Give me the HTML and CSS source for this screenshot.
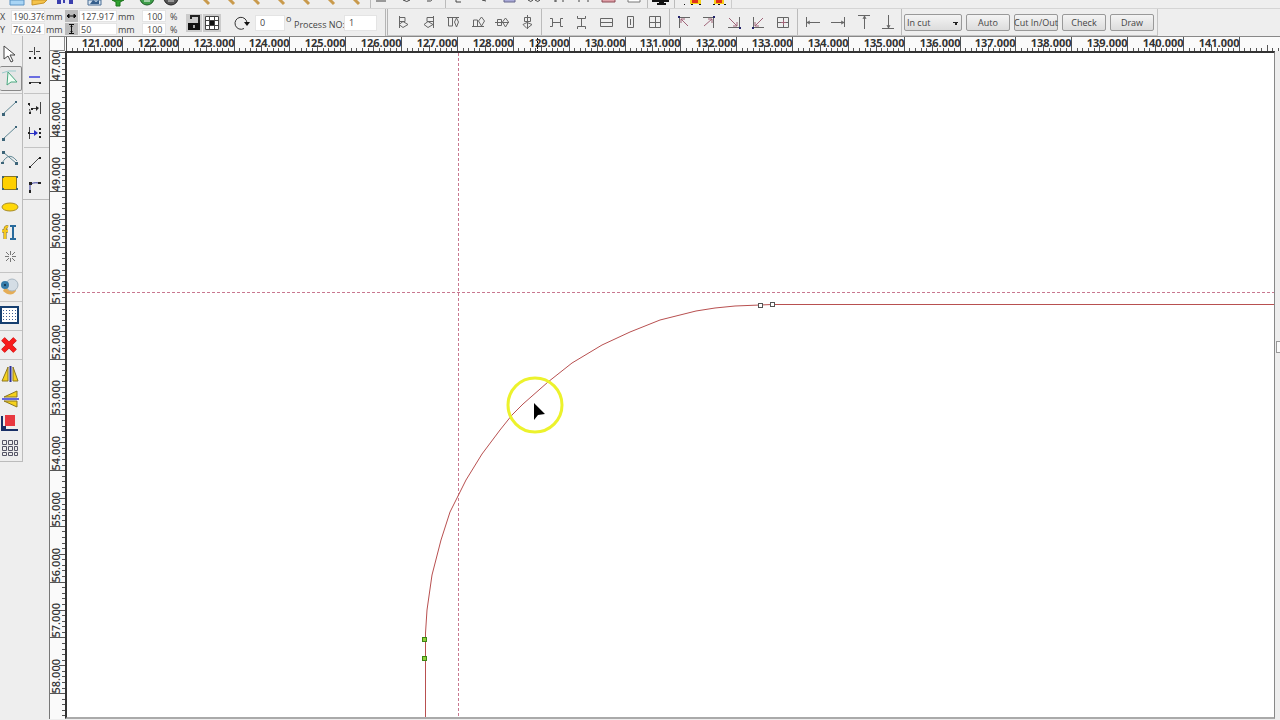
FILE: index.html
```html
<!DOCTYPE html>
<html lang="en">
<head>
    <meta charset="UTF-8">
    <meta name="viewport" content="width=device-width, initial-scale=1.0">
    <title>Laser Cut Editor</title>
    <link rel="stylesheet" href="styles.css">
</head>
<body>

<div class="main-toolbar">
    <div class="strip">
        <button aria-label="New"><svg width="24" height="8"><path d="M5 0h14v5H5z" fill="#a9d5f5" stroke="#5a93c4"/></svg></button>
        <button aria-label="Open"><svg width="24" height="8"><path d="M3 0h15l-3 3-12 2z" fill="#f5c34a" stroke="#c89428"/></svg></button>
        <button aria-label="Save"><svg width="24" height="8"><path d="M4 0h16v4H4z" fill="#3a3fae"/><path d="M8 0h8v4H8z" fill="#e8e8f4"/><path d="M10 0h2v3h-2z" fill="#3a3fae"/></svg></button>
    </div>
    <i class="cut"></i>
    <div class="strip">
        <button aria-label="Import"><svg width="24" height="8"><path d="M6 0h13v5H6z" fill="#d7e4f0" stroke="#4a6f96"/><path d="M8 4l3-4 3 2 3-2v4z" fill="#365f8c"/></svg></button>
        <button aria-label="Export"><svg width="24" height="8"><path d="M6 0h12l-4 2v4h-4V2z" fill="#2fa32f" stroke="#1c741c"/></svg></button>
    </div>
    <i class="cut"></i>
    <div class="strip">
        <button aria-label="Undo"><svg width="24" height="8"><circle cx="12" cy="-2" r="7" fill="#3f9e4a" stroke="#1c5c25"/><path d="M9 1h6" stroke="#fff"/></svg></button>
        <button aria-label="Redo"><svg width="24" height="8"><circle cx="12" cy="-2" r="7" fill="#555" stroke="#222"/><path d="M9 1h6" stroke="#ddd"/></svg></button>
    </div>
    <i class="cut wide"></i>
    <div class="strip zooms">
        <button aria-label="Move view"><svg width="24" height="8"><path d="M9-1l5 5" class="handle"/></svg></button>
        <button aria-label="Zoom in"><svg width="24" height="8"><path d="M9-1l5 5" class="handle"/></svg></button>
        <button aria-label="Zoom out"><svg width="24" height="8"><path d="M9-1l5 5" class="handle"/></svg></button>
        <button aria-label="Zoom window"><svg width="24" height="8"><path d="M9-1l5 5" class="handle"/></svg></button>
        <button aria-label="Zoom page"><svg width="24" height="8"><path d="M9-1l5 5" class="handle"/></svg></button>
        <button aria-label="Zoom all"><svg width="24" height="8"><path d="M9-1l5 5" class="handle"/></svg></button>
        <button aria-label="Zoom selection"><svg width="24" height="8"><path d="M9-1l5 5" class="handle"/></svg></button>
    </div>
    <i class="rule"></i>
    <div class="strip">
        <button aria-label="Path"><svg width="24" height="8"><path d="M4 1h10" class="dark"/></svg></button>
        <button aria-label="Close curve"><svg width="24" height="8"><path d="M7 0q4 3 7 0" class="dark"/></svg></button>
        <button aria-label="Smooth"><svg width="24" height="8"><path d="M7 1q4 1 6-2" class="dark"/></svg></button>
    </div>
    <i class="rule"></i>
    <div class="strip zooms">
        <button aria-label="Check data"><svg width="24" height="8"><path d="M9 0v2h5" class="dark"/></svg></button>
        <button aria-label="Merge"><svg width="24" height="8"><path d="M10 0l4 1" class="dark"/></svg></button>
        <button aria-label="Offset"><svg width="24" height="8"><path d="M7-1h11v3H7z" fill="#a9a9d8" stroke="#66668c"/></svg></button>
        <button aria-label="Link"><svg width="24" height="8"><path d="M6 0q3 3 5 0M13 0q3 3 5 0" class="dark"/></svg></button>
        <button aria-label="Unlink"><svg width="24" height="8"><path d="M8 0v2M16 0v2M8 1h2" class="dark"/></svg></button>
        <button aria-label="Path order"><svg width="24" height="8"><path d="M7 0v2M16 0v2" class="dark"/></svg></button>
        <button aria-label="Erase"><svg width="24" height="8"><path d="M5-1h13v3H5z" fill="#dfa0a8" stroke="#8c4a54"/></svg></button>
        <button aria-label="Frame"><svg width="24" height="8"><path d="M6-1h12v3H6z" fill="#fff" stroke="#777"/></svg></button>
    </div>
    <i class="rule"></i>
    <div class="strip"><button aria-label="Preview"><svg width="24" height="8"><path d="M3 0h17v2h-5v1h2v2H8V3h2V2H3z" fill="#111"/></svg></button></div>
    <i class="rule"></i>
    <div class="strip zooms groups">
        <button aria-label="Group"><svg width="24" height="8"><path d="M8 0h11v4H8z" fill="#f8d018"/><path d="M10 0h6v3h-6z" fill="#e03018"/><path d="M2 4h1v1H2zM9 4h2v1H9zM17 4h2v1h-2z" fill="#111"/></svg></button>
        <button aria-label="Ungroup"><svg width="24" height="8"><path d="M7 0h10v4H7z" fill="#f8d018"/><path d="M9 0h6v3H9z" fill="#e03018"/><path d="M6 4h2v1H6zM11 4h2v1h-2zM17 4h2v1h-2z" fill="#111"/></svg></button>
    </div>
</div>

<div class="prop-bar">
    <div class="size-grid">
        <label for="pos-x">X</label><input id="pos-x" value="190.376"><span>mm</span>
        <svg class="arrow" width="13" height="12"><path d="M2 6h9M4 4L2 6l2 2zM9 4l2 2-2 2z"/></svg>
        <input aria-label="Width" value="127.917"><span>mm</span><input aria-label="Scale X" class="pct" value="100"><span>%</span>
        <label for="pos-y">Y</label><input id="pos-y" value="76.024"><span>mm</span>
        <svg class="arrow" width="13" height="12"><path d="M6.500 2v8M4 1.500h5M4 10.500h5M5.500 3.500h2M5.500 8.500h2"/></svg>
        <input aria-label="Height" value="50"><span>mm</span><input aria-label="Scale Y" class="pct" value="100"><span>%</span>
    </div>
    <button class="toggle" aria-label="Lock ratio"><svg width="16" height="18"><path d="M2 9h12v7H2z" fill="#111"/><path d="M5 5V2h8v7" fill="none" stroke="#222" stroke-width="2"/><path d="M7 11h2v3H7z" fill="#aaa"/></svg></button>
    <button class="toggle" aria-label="Anchor point"><svg width="18" height="18"><path d="M2 2h14v14H2z" fill="#fff"/><path d="M2.500 2.500h13v13h-13zM2 6.500h14M2 11.500h14M6.500 2v14M11.500 2v14" class="dark"/><path d="M7 7h4v4H7z" fill="#111"/></svg></button>
    <svg class="rotate" width="16" height="16"><path d="M10 13.500a6 6 0 1 1 3-5" fill="none" stroke="#333"/><path d="M10 7h6l-3 4z" fill="#111"/></svg>
    <input class="angle" aria-label="Rotation" value="0"><span class="degree">o</span>
    <label class="process" for="process">Process NO:</label><input class="process-no" id="process" value="1">

    <div class="align-bar">
        <div class="icons six">
            <button aria-label="Align left"><svg class="ico"><path d="M3.500 2v12M3 3.500h6v4H3M3 10.500l4-3 5 3-5 3z"/></svg></button>
            <button aria-label="Align right"><svg class="ico"><path d="M12.500 2v12M12 3.500H6v4h6M12 10.500l-5-3-4 3 4 3z"/></svg></button>
            <button aria-label="Align top"><svg class="ico"><path d="M2 3.500h12M3.500 4v8h4V4M11.500 4l2 4-2 5-2-5z"/></svg></button>
            <button aria-label="Align bottom"><svg class="ico"><path d="M2 12.500h12M3.500 12V6h4v6M11.500 3l3 4-3 5-3-5z"/></svg></button>
            <button aria-label="Align middle"><svg class="ico"><path d="M1 8.500h14M3.500 5.500h4v6h-4zM11.500 4l3 4-3 5-3-5z"/></svg></button>
            <button aria-label="Align center"><svg class="ico"><path d="M8.500 1v14M5.500 3.500h6v4h-6zM4 10.500l4-2 5 2-5 4z"/></svg></button>
        </div>
        <i class="rule"></i>
        <div class="icons five">
            <button aria-label="Distribute across"><svg class="ico"><path d="M2 4.500h2.500v8H2M15 4.500h-2.500v8H15M5 8.500h7"/></svg></button>
            <button aria-label="Distribute down"><svg class="ico"><path d="M4.500 2v2.500h8V2M4.500 15v-2.500h8V15M8.500 5v7"/></svg></button>
            <button aria-label="Same width"><svg class="ico"><path d="M2.500 4.500h12v8h-12zM2 8.500h12"/></svg></button>
            <button aria-label="Same height"><svg class="ico"><path d="M5.500 2.500h6v11h-6zM8.500 5v6"/></svg></button>
            <button aria-label="Same size"><svg class="ico"><path d="M2.500 2.500h11v11h-11zM2 8.500h12M8.500 2v12"/></svg></button>
        </div>
        <i class="rule"></i>
        <div class="icons five">
            <button aria-label="To top left"><svg class="ico"><path d="M3.500 14V3.500H14"/><path class="red" d="M12 12L5 5M5 9V5h4"/><path class="dot" d="M2 2h2v2H2z"/></svg></button>
            <button aria-label="To top right"><svg class="ico"><path d="M2 3.500h10.500V14"/><path class="red" d="M3 12l8-7M7 5h4v4"/><path class="dot" d="M12 2h2v2h-2z"/></svg></button>
            <button aria-label="To bottom right"><svg class="ico"><path d="M2 13.500h11.500V3"/><path class="red" d="M3 4l8 8M7 12h4V8"/><path class="dot" d="M13 13h2v2h-2z"/></svg></button>
            <button aria-label="To bottom left"><svg class="ico"><path d="M3.500 3v10.500H14"/><path class="red" d="M13 4l-8 8M5 8v4h4"/><path class="dot" d="M2 13h2v2H2z"/></svg></button>
            <button aria-label="To page center"><svg class="ico"><path d="M2.500 3.500h11v10h-11zM2 8.500h12M8.500 3v10"/><path class="red" d="M6 8.500h5M8.500 6v5"/></svg></button>
        </div>
        <i class="rule"></i>
        <div class="icons four">
            <button aria-label="To left edge"><svg class="ico"><path d="M2.500 3v10M3 8.500h13M6 7L3 8.500 6 10"/></svg></button>
            <button aria-label="To right edge"><svg class="ico"><path d="M15.500 3v10M2 8.500h13M12 7l3 1.500-3 1.500"/></svg></button>
            <button aria-label="To top edge"><svg class="ico"><path d="M4 1.500h12M10.500 2v13M9 5l1.500-3L12 5"/></svg></button>
            <button aria-label="To bottom edge"><svg class="ico"><path d="M3 14.500h12M9.500 1v13M8 11l1.500 3 1.500-3"/></svg></button>
        </div>
        <i class="rule"></i>
        <div class="cut-tools">
            <select aria-label="Cut type"><option>In cut</option><option>Out cut</option></select>
            <button>Auto</button>
            <button>Cut In/Out</button>
            <button>Check</button>
            <button>Draw</button>
        </div>
    </div>
</div>

<main class="editor">
    <div class="tools draw-tools">
        <button aria-label="Pick"><svg class="tool"><path d="M4 2v13l4-3 3 6 2-1-3-6h5z" fill="#fff" stroke="#444"/></svg></button>
        <button class="active" aria-label="Edit node"><svg class="tool"><path d="M2 4q6-3 14-2" fill="none" stroke="#9cc"/><path d="M8 3l-1 13 4-3 6 0z" fill="#effff4" stroke="#4aa680"/></svg></button>
        <hr>
        <button aria-label="Line"><svg class="tool"><path d="M3 16L16 4" class="blue"/><path d="M2 15h3v3H2zM15 3h2v2h-2z" class="pt"/></svg></button>
        <button aria-label="Polyline"><svg class="tool"><path d="M3 16L16 4" class="blue"/><path d="M2 15h3v3H2zM15 3h2v2h-2z" class="pt"/></svg></button>
        <button aria-label="Curve"><svg class="tool"><path d="M2 15C7 7 11 6 17 13M3 4l13 11" class="blue"/><path d="M2 3h3v3H2zM15 14h3v3h-3zM1 14h3v2H1z" class="pt"/></svg></button>
        <button aria-label="Rectangle"><svg class="tool"><path d="M2.500 3.500h14v13h-14z" fill="#ffd000" stroke="#8a7420"/><path d="M2 3h2v2H2zM16 3h2v2h-2zM2 15h2v2H2zM16 15h2v2h-2z" class="pt"/></svg></button>
        <button aria-label="Ellipse"><svg class="tool"><ellipse cx="10" cy="9" rx="8" ry="4" fill="#ffd808" stroke="#a88c28"/></svg></button>
        <button aria-label="Text"><svg class="tool"><path d="M8 4q-3-1-3 3v9M2 8h6" fill="none" stroke="#866c12" stroke-width="3"/><path d="M8 4q-3-1-3 3v9M2 8h6" fill="none" stroke="#f5c820" stroke-width="2"/><path d="M10 3h6M13 3v13M10 16h6" fill="none" stroke="#286a9c" stroke-width="2"/></svg></button>
        <button aria-label="Point"><svg class="tool"><path d="M10.500 3v4M10.500 10v4M5 8.500h4M12 8.500h4M6 4l3 3M12 10l3 3M15 4l-3 3M9 10l-3 3" fill="none" stroke="#777"/></svg></button>
        <hr>
        <button aria-label="Capture"><svg class="tool"><path d="M3 14q8 7 13 0l-1-4H5z" fill="#e5ad56"/><circle cx="12" cy="8" r="6" fill="#d4dde5" stroke="#a9b7c2"/><circle cx="5" cy="8" r="4" fill="#367caa"/><circle cx="5" cy="8" r="1" fill="#102a40"/></svg></button>
        <hr>
        <button aria-label="Grid"><svg class="tool"><path d="M1 1h17v16H1z" fill="#fff" stroke="#163f70" stroke-width="2"/><path d="M3 4.500h14M3 7.500h14M3 10.500h14M3 13.500h14" stroke="#3d5e96" stroke-dasharray="1 2"/></svg></button>
        <hr>
        <button aria-label="Delete"><svg class="tool"><path d="M3 4l12 12M15 4L3 16" stroke="#b81818" stroke-width="5"/><path d="M3 4l12 12M15 4L3 16" stroke="#f81c1c" stroke-width="4"/></svg></button>
        <hr>
        <button aria-label="Mirror horizontal"><svg class="tool"><path d="M8 3v14H2zM13 3v14h5z" fill="#f6d21c" stroke="#8c7620"/><path d="M10.500 2v16" stroke="#2d329c" stroke-width="2"/></svg></button>
        <button aria-label="Mirror vertical"><svg class="tool"><path d="M17 2v6H4zM17 18v-6H4z" fill="#f6d21c" stroke="#8c7620"/><path d="M2 10h17" stroke="#6466dc" stroke-width="2"/></svg></button>
        <button aria-label="Align origin"><svg class="tool"><path d="M5 1h10v11H5z" fill="#e83840"/><path d="M2 2v14h16" fill="none" stroke="#182f66" stroke-width="2"/><path d="M2 12h4v4H2z" fill="#182f66"/></svg></button>
        <button aria-label="Array copy"><svg class="tool"><path d="M2.500 1.500h4v4h-4zM8.500 1.500h4v4h-4zM14.500 1.500h3v4h-3zM2.500 7.500h4v4h-4zM8.500 7.500h4v4h-4zM14.500 7.500h3v4h-3zM2.500 13.500h4v3h-4zM8.500 13.500h4v3h-4zM14.500 13.500h3v3h-3z" fill="#eee" stroke="#556"/></svg></button>
    </div>
    <div class="tools node-tools">
        <button aria-label="Add node"><svg class="tool"><path d="M10.500 3v8M5 7.500h4M12 7.500h4" fill="none" stroke="#444"/><path d="M5 13h2v2H5zM10 13h2v2h-2zM15 13h2v2h-2z" fill="#222"/></svg></button>
        <button aria-label="Delete node"><svg class="tool"><path d="M5 8h11" stroke="#6a6de0" stroke-width="2"/><path d="M6 13.500h9" class="dark"/><path d="M5 13h2v2H5zM15 13h2v2h-2z" fill="#222"/></svg></button>
        <hr>
        <button aria-label="Join nodes"><svg class="tool"><path d="M5.500 6v2M5.500 11l1 4M16.500 4v12M8 10.500h6" class="dark"/><path d="M12 8l3 2-3 3zM4 5h2v2H4zM5 14h2v2H5zM7 10h2v2H7z" fill="#222"/></svg></button>
        <button aria-label="Split nodes"><svg class="tool"><path d="M5.500 4v12" class="dark"/><path d="M6 10.500h7" stroke="#2930c4"/><path d="M10 7l4 3-4 3z" fill="#2930c4"/><path d="M4 9h2v2H4zM15 5h2v2h-2zM15 9h2v2h-2zM15 13h2v2h-2z" fill="#222"/></svg></button>
        <hr>
        <button aria-label="To line"><svg class="tool"><path d="M6 15l9-9" class="dark"/><path d="M5 14h2v2H5zM15 5h2v2h-2z" fill="#222"/></svg></button>
        <button aria-label="To curve"><svg class="tool"><path d="M6 15V8q2-3 9-2" fill="none" stroke="#33369c"/><path d="M5 13h2v3H5zM5 5h3v3H5zM14 5h3v2h-3z" fill="#222"/></svg></button>
    </div>

    <section class="workspace">
        <div class="corner"></div>
        <svg class="ruler-x" id="ruler-x"></svg>
        <svg class="ruler-y" id="ruler-y"></svg>
        <svg class="sheet">
            <line class="guide" x1="0" y1="239.500" x2="100%" y2="239.500"/>
            <line class="guide" x1="391.500" y1="0" x2="391.500" y2="100%"/>
            <polyline class="shape" points="358.500,580 360,557 365,522 374,487 383,459 391,443 399,427 415,401 433,377 445,362 456,351 481,329 505,310 535,292 563,279 593,267 629,258 648,255 668,253 693,252 705,251.500"/>
            <line class="shape" x1="358.500" y1="580" x2="358.500" y2="100%"/>
            <line class="shape" x1="705" y1="251.500" x2="100%" y2="251.500"/>
            <rect class="node selected" x="355.500" y="584.500" width="4" height="4"/>
            <rect class="node selected" x="355.500" y="603.500" width="4" height="4"/>
            <rect class="node" x="691.500" y="250.500" width="4" height="4"/>
            <rect class="node" x="703.500" y="249.500" width="4" height="4"/>
            <circle class="highlight" cx="468" cy="352" r="27"/>
            <path d="M467 350v17l4-5 7-1z"/>
        </svg>
        <div class="scroll-y"><button class="thumb" aria-label="Scroll"></button></div>
    </section>
</main>

<script>
    const NS = 'http://www.w3.org/2000/svg';
    const PITCH = 55.85;
    const LABEL = 36;

    function add(parent, name, attrs, text) {
        const el = document.createElementNS(NS, name);
        for (const key in attrs) el.setAttribute(key, attrs[key]);
        if (text) el.textContent = text;
        parent.appendChild(el);
    }

    function tickLength(i) {
        if (i % 10 === 0) return 15;
        return i % 5 === 0 ? 6 : 3;
    }

    // horizontal ruler, 120 mm sits at the left edge
    function drawRulerX() {
        const ruler = document.getElementById('ruler-x');
        const width = ruler.getBoundingClientRect().width;
        ruler.innerHTML = '';
        for (let i = 0; i * PITCH / 10 + 2 < width; i++) {
            const x = Math.round(1 + i * PITCH / 10) + 0.5;
            add(ruler, 'line', { x1: x, x2: x, y1: 14 - tickLength(i), y2: 14 });
            if (i % 10 === 0 && i > 0) {
                add(ruler, 'text', { x: x, y: 10, 'text-anchor': 'end' }, (120 + i / 10).toFixed(3));
            }
        }
        add(ruler, 'path', { d: 'M472.500 1v13', class: 'marker' });
    }

    // vertical ruler, labels read upwards from their tick
    function drawRulerY() {
        const ruler = document.getElementById('ruler-y');
        const height = ruler.getBoundingClientRect().height;
        ruler.innerHTML = '';
        for (let i = -5; i * PITCH / 10 + 29 < height; i++) {
            const y = Math.round(29 + i * PITCH / 10 * 0.998) + 0.5;
            add(ruler, 'line', { y1: y, y2: y, x1: 15 - tickLength(i), x2: 15 });
            if (i % 10 === 0) {
                add(ruler, 'text', { transform: `translate(10 ${y}) rotate(-90)` }, (47 + i / 10).toFixed(3));
            }
        }
    }

    function drawRulers() {
        drawRulerX();
        drawRulerY();
    }

    drawRulers();
    window.addEventListener('resize', drawRulers);
</script>

</body>
</html>
```
FILE: styles.css
```css
* {
    box-sizing: border-box;
}

body {
    margin: 0;
    height: 100vh;
    display: flex;
    flex-direction: column;
    overflow: hidden;
    background-color: #eee;
    color: #444;
    font-family: "Open Sans", "Noto Sans", sans-serif;
    font-size: 9px;
}

button, input, select {
    font: inherit;
    color: inherit;
    margin: 0;
    padding: 0;
    border: 0;
    background: none;
    border-radius: 0;
}

svg {
    display: block;
    flex: none;
}

.dark {
    fill: none;
    stroke: #444;
}

.rule {
    flex: none;
    width: 1px;
    margin: 0 2px;
    background-color: #bbb;
}

/* bottom part of the main toolbar */
.main-toolbar {
    display: flex;
    flex: none;
    height: 9px;
    padding-left: 5px;
    border-bottom: 1px solid #d4d4d4;
}

.main-toolbar .strip {
    display: flex;
}

.main-toolbar .zooms {
    gap: 1px;
}

.main-toolbar .groups {
    padding-left: 6px;
    border-right: 1px solid #ccc;
}

.main-toolbar .cut {
    width: 5px;
}

.main-toolbar .wide {
    width: 12px;
}

.main-toolbar .rule {
    margin: 0 1px;
}

.handle {
    stroke: #c99a4c;
    stroke-width: 3;
}

/* properties */
.prop-bar {
    display: flex;
    flex: none;
    align-items: center;
    height: 27px;
    white-space: nowrap;
}

.prop-bar input {
    background-color: #fff;
    border: 1px solid #e4e4e4;
}

.size-grid {
    display: grid;
    flex: none;
    grid-template-columns: 11px 34px 20px 14px 38px 25px 24px 20px;
    grid-template-rows: 13px 13px;
    align-items: center;
}

.size-grid input {
    width: 100%;
    height: 12px;
    padding-left: 1px;
}

.size-grid .pct {
    padding-left: 4px;
}

.size-grid span {
    padding-left: 1px;
}

.size-grid .pct + span {
    padding-left: 4px;
}

.arrow {
    background-color: #bbb;
    stroke: #111;
    fill: #111;
}

.toggle {
    flex: none;
    margin-right: 1px;
    background-color: #ccc;
}

.rotate {
    margin-left: 12px;
}

.prop-bar .angle {
    width: 30px;
    height: 16px;
    margin-left: 5px;
    padding-left: 4px;
}

.degree {
    width: 9px;
    padding-left: 1px;
    padding-bottom: 8px;
}

.process {
    width: 50px;
    padding-top: 3px;
}

.prop-bar .process-no {
    width: 33px;
    height: 16px;
    padding-left: 4px;
}

.align-bar {
    display: flex;
    flex: none;
    align-items: center;
    align-self: stretch;
    margin-left: 8px;
    padding-left: 4px;
    border: 1px solid #c4c4c4;
    border-top: 0;
    border-left: 3px double #b4b4b4;
}

.align-bar .rule {
    align-self: stretch;
}

.icons {
    display: flex;
    justify-content: space-between;
}

.icons button {
    width: 24px;
    padding: 0 4px;
}

.six {
    width: 147px;
}

.five {
    width: 123px;
}

.four {
    width: 99px;
}

.ico {
    width: 16px;
    height: 16px;
    fill: none;
    stroke: #666;
}

.ico .red {
    stroke: #a06478;
}

.ico .dot {
    fill: #24246c;
    stroke: none;
}

.cut-tools {
    display: flex;
    gap: 4px;
    padding-right: 3px;
}

.cut-tools button, .cut-tools select {
    width: 44px;
    height: 17px;
    border: 1px solid #999;
    border-radius: 2px;
    background: linear-gradient(#f4f4f4, #dcdcdc);
    white-space: nowrap;
}

.cut-tools button {
    display: flex;
    align-items: center;
    justify-content: center;
}

.cut-tools select {
    width: 58px;
    padding-left: 2px;
    appearance: none;
    background: linear-gradient(45deg, transparent 50%, #222 50%) 48px 7px / 3px 3px no-repeat,
        linear-gradient(-45deg, transparent 50%, #222 50%) 51px 7px / 3px 3px no-repeat,
        linear-gradient(#f4f4f4, #dcdcdc);
}

.editor {
    display: flex;
    flex: 1;
    min-height: 0;
}

/* tool columns */
.tools {
    display: flex;
    flex: none;
    flex-direction: column;
    align-self: flex-start;
    width: 23px;
    padding-top: 5px;
    border-right: 1px solid #bbb;
    border-bottom: 1px solid #bbb;
}

.node-tools {
    width: 26px;
    padding-left: 1px;
    border-right: 0;
}

.tools button {
    width: 22px;
    height: 25px;
}

.tools .active {
    border: 1px solid #888;
    border-left: 0;
    border-radius: 2px;
    background-color: #e6e6e6;
}

.tools hr {
    width: 100%;
    height: 1px;
    margin: 2px 0 1px;
    border: 0;
    background-color: #c4c4c4;
}

.tool {
    width: 20px;
    height: 20px;
}

.blue {
    fill: none;
    stroke: #5f8794;
}

.pt {
    fill: #3c6478;
}

/* rulers and drawing area */
.workspace {
    display: grid;
    flex: 1;
    grid-template-columns: 16px 1fr 5px;
    grid-template-rows: 15px 1fr;
    min-width: 0;
    padding-bottom: 1px;
}

.corner {
    border: 1px solid #888;
    background-color: #fafafa;
}

.ruler-x, .ruler-y {
    width: 100%;
    height: 100%;
    overflow: hidden;
    background-color: #fafafa;
    stroke: #555;
    font-size: 11px;
    font-weight: 700;
}

.ruler-x {
    grid-column: 2 / 4;
    border-top: 1px solid #888;
}

.ruler-y {
    border-left: 1px solid #777;
    font-weight: 600;
}

.ruler-x text, .ruler-y text {
    fill: #333;
    stroke: none;
}

.marker {
    stroke: #111;
    stroke-dasharray: 2 1;
}

.sheet {
    width: 100%;
    height: 100%;
    overflow: hidden;
    background-color: #fff;
    border: 2px solid #333;
    border-right: 1px solid #888;
    border-bottom: 2px solid #aaa;
}

.guide {
    stroke: #c87890;
    stroke-dasharray: 3 2;
}

.shape {
    fill: none;
    stroke: #b85050;
}

.node {
    fill: #fff;
    stroke: #555;
}

.node.selected {
    fill: #8fd03c;
    stroke: #3c8414;
}

.highlight {
    fill: none;
    stroke: #ecf22c;
    stroke-width: 3;
}

.scroll-y {
    display: flex;
    flex-direction: column;
    justify-content: center;
    padding-left: 1px;
    overflow: hidden;
}

.scroll-y .thumb {
    width: 12px;
    height: 12px;
    margin-bottom: 76px;
    border: 1px solid #999;
    background-color: #fafafa;
}
```
